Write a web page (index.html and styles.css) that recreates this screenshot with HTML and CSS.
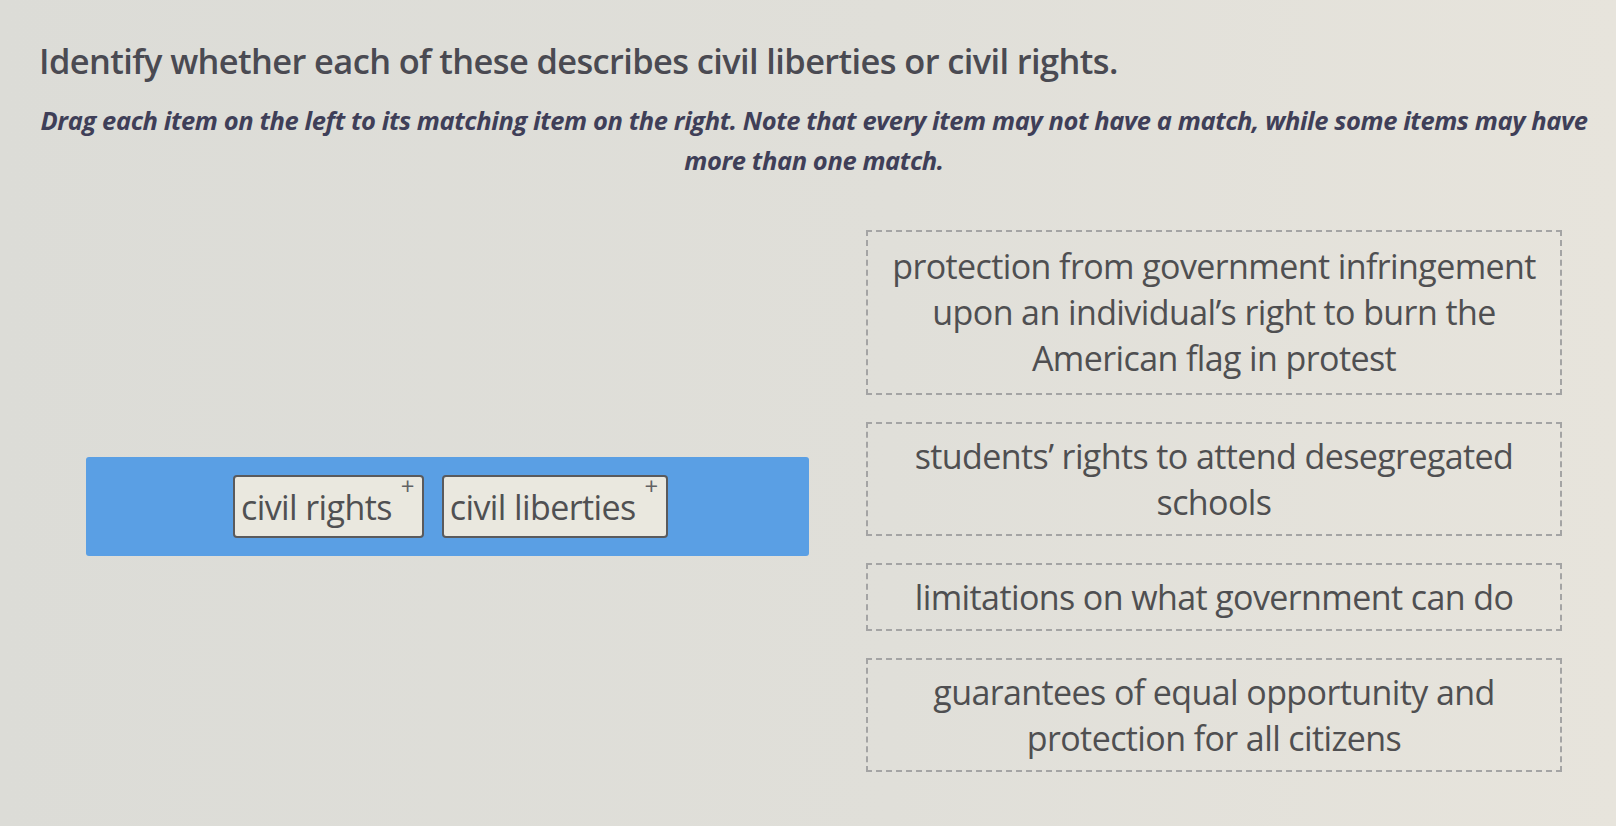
FILE: index.html
```html
<!DOCTYPE html>
<html lang="en">
<head>
<meta charset="utf-8">
<title>Matching</title>
<link rel="stylesheet" href="styles.css">
</head>
<body>
<main class="question">
  <h1 class="prompt">Identify whether each of these describes civil liberties or civil rights.</h1>
  <p class="directions">Drag each item on the left to its matching item on the right. Note that every item may not have a match, while some items may have more than one match.</p>
  <div class="board">
    <div class="source">
      <div class="tray">
        <div class="chip">civil rights<span class="plus">+</span></div>
        <div class="chip">civil liberties<span class="plus">+</span></div>
      </div>
    </div>
    <div class="targets">
      <div class="slot">protection from government infringement upon an individual’s right to burn the American flag in protest</div>
      <div class="slot">students’ rights to attend desegregated schools</div>
      <div class="slot">limitations on what government can do</div>
      <div class="slot">guarantees of equal opportunity and protection for all citizens</div>
    </div>
  </div>
</main>
</body>
</html>
```
FILE: styles.css
```css
html, body {
  margin: 0;
  height: 100%;
}
body {
  background: linear-gradient(90deg, #dcdcd7 0%, #e0dfd9 55%, #e7e4dc 100%);
  font-family: "Open Sans", "Liberation Sans", sans-serif;
  color: #4a4a4c;
  overflow: hidden;
}
.question {
  padding: 36px 0 0 39px;
  width: 1550px;
}
.prompt {
  margin: 0;
  font-size: 34.4px;
  font-weight: 600;
  line-height: 50px;
  color: #4a4a52;
  letter-spacing: -0.6px;
}
.directions {
  margin: 14px 0 0;
  text-align: center;
  font-size: 25.5px;
  font-weight: 700;
  font-style: italic;
  line-height: 40px;
  color: #3f3f58;
  letter-spacing: -0.4px;
}
.board {
  margin-top: 50px;
  display: grid;
  grid-template-columns: 723px 696px;
  column-gap: 57px;
  margin-left: 47px;
  align-items: center;
}
.source {
  padding-top: 11px;
}
.tray {
  background: #5a9fe4;
  height: 99px;
  border-radius: 3px;
  display: flex;
  align-items: center;
  gap: 18px;
  padding-left: 147px;
  box-sizing: border-box;
}
.chip {
  position: relative;
  background: #eae8df;
  border: 2px solid #5a5a5c;
  border-radius: 4px;
  height: 63px;
  box-sizing: border-box;
  display: flex;
  align-items: center;
  padding: 0 30px 0 6px;
  font-size: 34px;
  color: #505052;
  letter-spacing: -0.6px;
}
.plus {
  position: absolute;
  top: -4px;
  right: 8px;
  font-size: 24px;
  line-height: 26px;
  color: #626264;
}
.targets {
  display: flex;
  flex-direction: column;
  gap: 27px;
}
.slot {
  border: 2px dashed #a4a4a4;
  padding: 9px 12px;
  text-align: center;
  font-size: 34px;
  line-height: 46px;
  color: #4f4f51;
  letter-spacing: -0.6px;
}
.slot:first-child {
  padding: 11px 12px 12px;
}
```
